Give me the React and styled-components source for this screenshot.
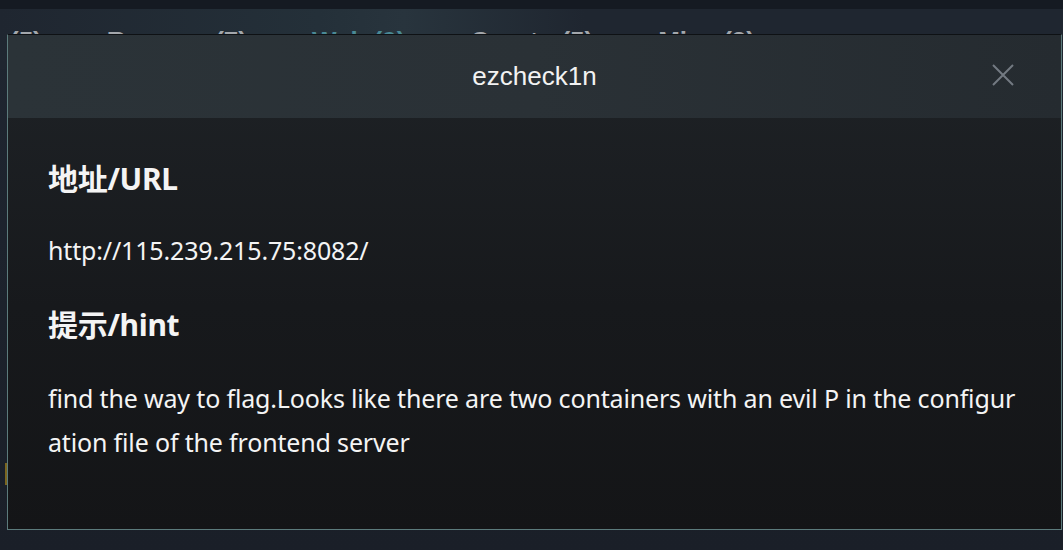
import React from "react";
import styled, { createGlobalStyle } from "styled-components";

const GlobalStyle = createGlobalStyle`
	html, body {
		margin: 0;
		padding: 0;
		background: #1b212b;
	}
	#root {
		width: 1063px;
		height: 550px;
	}
`;

const Page = styled.div`
	position: relative;
	width: 1063px;
	height: 550px;
	overflow: hidden;
	background: linear-gradient(180deg, #1f2631 0%, #1a1f28 100%);
	font-family: "Noto Sans", "Noto Sans CJK SC", sans-serif;
`;

const TopBar = styled.div`
	height: 9px;
	background: #151a22;
`;

const Tabs = styled.div`
	display: flex;
	align-items: flex-start;
	gap: 65px;
	height: 60px;
	padding: 17px 0 0 10px;
	box-sizing: border-box;
	overflow: hidden;
	background: linear-gradient(90deg, #1f2630 0%, #243039 30%, #28343d 38%, #1f2630 55%, #1f2630 100%);
`;

const Tab = styled.div`
	font-family: "Liberation Sans", Arial, sans-serif;
	font-weight: bold;
	font-size: 26px;
	color: ${(p) => (p.$active ? "#4a8a96" : "#a3a7ac")};
	white-space: nowrap;
`;

const SideMark = styled.div`
	position: absolute;
	left: 5px;
	top: 463px;
	width: 3px;
	height: 22px;
	background: #7a6520;
`;

const Modal = styled.div`
	position: absolute;
	left: 7px;
	top: 34px;
	width: 1055px;
	height: 496px;
	box-sizing: border-box;
	border: 1px solid #5c7b7c;
	border-top-color: #0e1114;
	display: flex;
	flex-direction: column;
	background: linear-gradient(180deg, #1f2327 0%, #17191c 55%, #141517 100%);
`;

const Header = styled.div`
	position: relative;
	height: 83px;
	flex-shrink: 0;
	display: flex;
	align-items: center;
	justify-content: center;
	background: linear-gradient(90deg, #2b3338 0%, #2a3136 50%, #252b30 100%);
`;

const Title = styled.div`
	font-family: "Liberation Sans", Arial, sans-serif;
	font-size: 26px;
	color: #f2f2f2;
	margin-top: -1px;
`;

const Close = styled.button`
	position: absolute;
	right: 47px;
	top: 29px;
	width: 22px;
	height: 22px;
	padding: 0;
	border: none;
	background: none;
	display: flex;
	align-items: center;
	justify-content: center;
`;

const Body = styled.div`
	padding: 41px 40px 0 40px;
	color: #f4f4f4;
`;

const Heading = styled.h3`
	margin: 0;
	font-size: 30px;
	font-weight: 700;
	line-height: 40px;
	letter-spacing: -0.3px;
`;

const Text = styled.p`
	margin: 0;
	font-size: 25px;
	line-height: 44px;
	letter-spacing: -0.16px;
	word-break: break-all;
`;

const Section = styled.div`
	margin-bottom: ${(p) => p.$gap}px;
	${Heading} {
		margin-bottom: ${(p) => p.$headGap}px;
	}
`;

export default function App() {
	return (
		<Page>
			<GlobalStyle />
			<TopBar />
			<Tabs>
				<Tab>(5)</Tab>
				<Tab>Reverse (7)</Tab>
				<Tab $active>Web (9)</Tab>
				<Tab>Crypto (5)</Tab>
				<Tab>Misc (3)</Tab>
			</Tabs>
			<SideMark />
			<Modal>
				<Header>
					<Title>ezcheck1n</Title>
					<Close aria-label="close">
						<svg width="22" height="22" viewBox="0 0 22 22">
							<path d="M1 1 L21 21 M21 1 L1 21" stroke="#737a82" strokeWidth="2" />
						</svg>
					</Close>
				</Header>
				<Body>
					<Section $gap={33} $headGap={29}>
						<Heading>地址/URL</Heading>
						<Text>http://115.239.215.75:8082/</Text>
					</Section>
					<Section $gap={0} $headGap={31}>
						<Heading>提示/hint</Heading>
						<Text>
							find the way to flag.Looks like there are two containers with an evil P in the configuration file of the frontend server
						</Text>
					</Section>
				</Body>
			</Modal>
		</Page>
	);
}
